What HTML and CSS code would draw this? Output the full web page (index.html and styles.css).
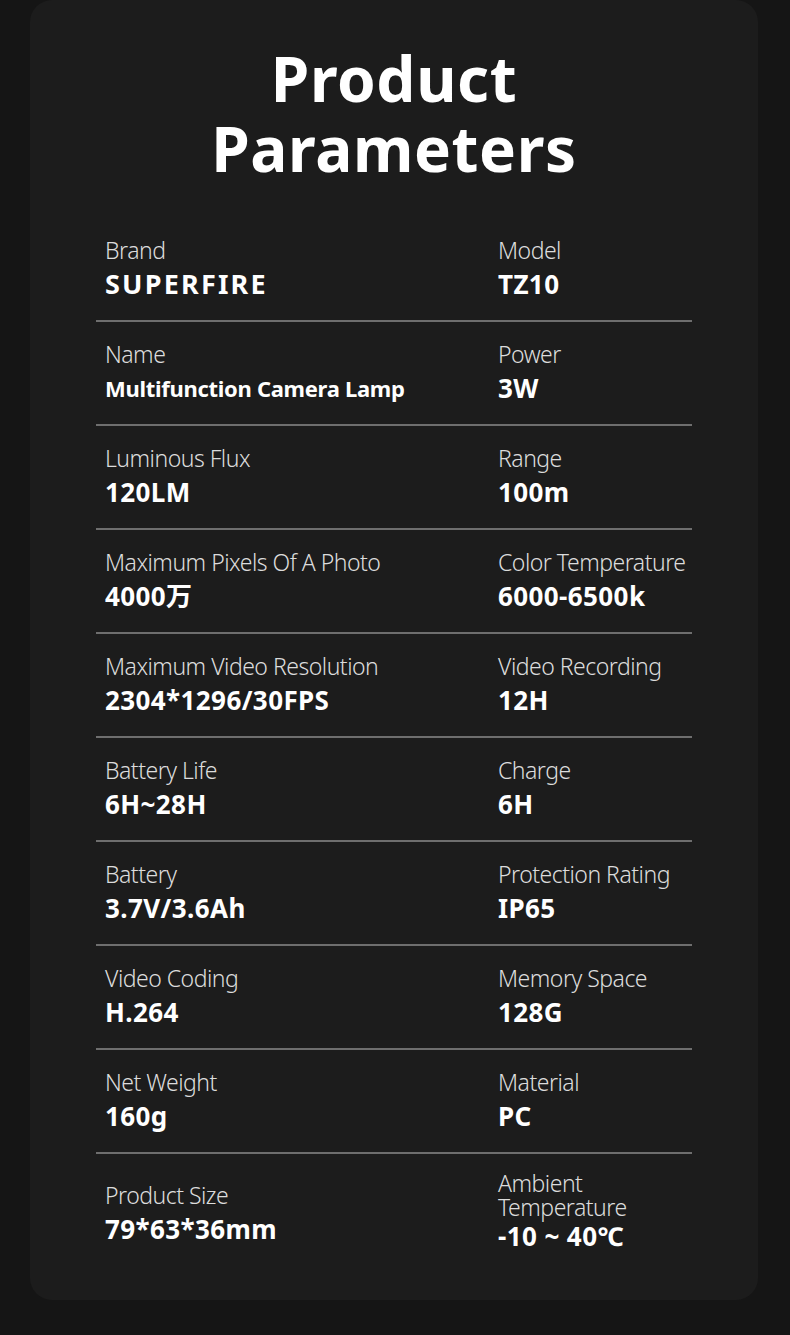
FILE: index.html
```html
<!DOCTYPE html>
<html lang="en">
<head>
<meta charset="utf-8">
<title>Product Parameters</title>
<link rel="stylesheet" href="styles.css">
</head>
<body>
<main class="card">
  <h1 class="title">Product<br>Parameters</h1>
  <section class="table">
    <div class="row">
      <div class="cell"><div class="label">Brand</div><div class="value value-brand">SUPERFIRE</div></div>
      <div class="cell"><div class="label">Model</div><div class="value">TZ10</div></div>
    </div>
    <div class="row">
      <div class="cell"><div class="label">Name</div><div class="value value-small">Multifunction Camera Lamp</div></div>
      <div class="cell"><div class="label">Power</div><div class="value">3W</div></div>
    </div>
    <div class="row">
      <div class="cell"><div class="label">Luminous Flux</div><div class="value">120LM</div></div>
      <div class="cell"><div class="label">Range</div><div class="value">100m</div></div>
    </div>
    <div class="row">
      <div class="cell"><div class="label">Maximum Pixels Of A Photo</div><div class="value">4000万</div></div>
      <div class="cell"><div class="label">Color Temperature</div><div class="value">6000-6500k</div></div>
    </div>
    <div class="row">
      <div class="cell"><div class="label">Maximum Video Resolution</div><div class="value">2304*1296/30FPS</div></div>
      <div class="cell"><div class="label">Video Recording</div><div class="value">12H</div></div>
    </div>
    <div class="row">
      <div class="cell"><div class="label">Battery Life</div><div class="value">6H~28H</div></div>
      <div class="cell"><div class="label">Charge</div><div class="value">6H</div></div>
    </div>
    <div class="row">
      <div class="cell"><div class="label">Battery</div><div class="value">3.7V/3.6Ah</div></div>
      <div class="cell"><div class="label">Protection Rating</div><div class="value">IP65</div></div>
    </div>
    <div class="row">
      <div class="cell"><div class="label">Video Coding</div><div class="value">H.264</div></div>
      <div class="cell"><div class="label">Memory Space</div><div class="value">128G</div></div>
    </div>
    <div class="row">
      <div class="cell"><div class="label">Net Weight</div><div class="value">160g</div></div>
      <div class="cell"><div class="label">Material</div><div class="value">PC</div></div>
    </div>
    <div class="row row-last">
      <div class="cell"><div class="label">Product Size</div><div class="value">79*63*36mm</div></div>
      <div class="cell"><div class="label label-wrap">Ambient<br>Temperature</div><div class="value">-10 ~ 40℃</div></div>
    </div>
  </section>
</main>
</body>
</html>
```

FILE: styles.css
```css
* { box-sizing: border-box; }

html, body {
  margin: 0;
  padding: 0;
  background: #151515;
}

body {
  font-family: "Noto Sans", "Open Sans", "Noto Sans CJK SC", sans-serif;
  color: #ffffff;
  width: 790px;
  height: 1335px;
  overflow: hidden;
}

.card {
  margin: 0 32px 0 30px;
  height: 1300px;
  background: #1c1c1c;
  border-radius: 22px;
  padding: 43px 0 0 66px;
}

.title {
  margin: 0;
  width: 596px;
  text-align: center;
  font-size: 62px;
  line-height: 70px;
  font-weight: 700;
  letter-spacing: 0.6px;
  color: #ffffff;
}

.table {
  margin-top: 35px;
  width: 596px;
}

.row {
  display: grid;
  grid-template-columns: 393px 1fr;
  height: 104px;
  border-bottom: 2px solid #6e6e6e;
  padding-top: 15px;
}

.cell {
  padding-left: 9px;
  display: flex;
  flex-direction: column;
}

.label {
  font-size: 23px;
  line-height: 34px;
  font-weight: 300;
  letter-spacing: -0.5px;
  color: #dcdcdc;
  white-space: nowrap;
}

.value {
  font-size: 26px;
  line-height: 34px;
  font-weight: 700;
  letter-spacing: 0.4px;
  color: #ffffff;
  white-space: nowrap;
}

.value-brand {
  font-size: 27px;
  letter-spacing: 2.2px;
}

.value-small {
  font-size: 22px;
  letter-spacing: -0.3px;
}

.row-last {
  border-bottom: none;
  height: auto;
  padding-top: 17px;
  align-items: center;
}

.label-wrap {
  line-height: 24px;
}
```
